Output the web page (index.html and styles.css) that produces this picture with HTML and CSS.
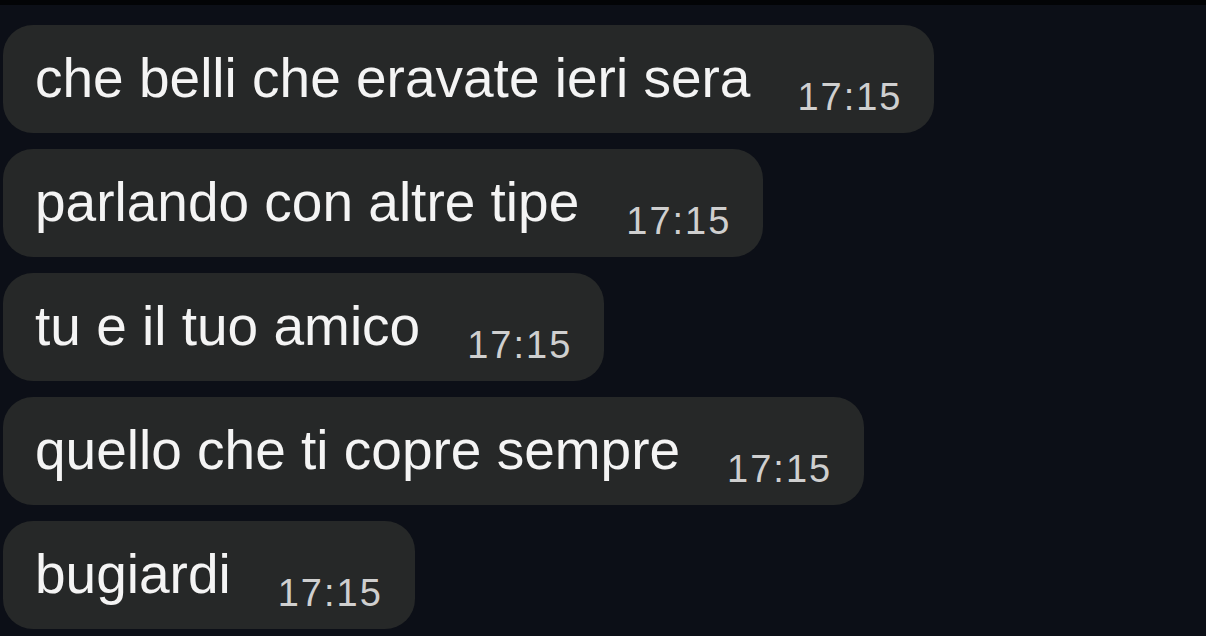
FILE: index.html
```html
<!DOCTYPE html>
<html lang="it">
<head>
<meta charset="utf-8">
<title>Chat</title>
<link rel="stylesheet" href="styles.css">
</head>
<body>
<div class="chat">
  <div class="bubble"><span class="msg">che belli che eravate ieri sera</span><span class="time">17:15</span></div>
  <div class="bubble"><span class="msg">parlando con altre tipe</span><span class="time">17:15</span></div>
  <div class="bubble"><span class="msg">tu e il tuo amico</span><span class="time">17:15</span></div>
  <div class="bubble"><span class="msg">quello che ti copre sempre</span><span class="time">17:15</span></div>
  <div class="bubble"><span class="msg">bugiardi</span><span class="time">17:15</span></div>
</div>
</body>
</html>
```

FILE: styles.css
```css
html, body {
  margin: 0;
  padding: 0;
  height: 100%;
  background: #0c0f17;
}
body {
  border-top: 5px solid #030406;
  box-sizing: border-box;
  overflow: hidden;
  font-family: "Liberation Sans", Arial, sans-serif;
}
.chat {
  display: flex;
  flex-direction: column;
  align-items: flex-start;
  gap: 16px;
  padding: 20px 0 0 3px;
}
.bubble {
  display: flex;
  align-items: flex-start;
  box-sizing: border-box;
  height: 108px;
  padding: 23px 32px 0 32px;
  background: #262828;
  border-radius: 30px;
}
.msg {
  font-size: 55px;
  line-height: 60px;
  color: #f4f4f4;
  white-space: nowrap;
}
.time {
  margin-left: 47px;
  margin-top: 30px;
  font-size: 38px;
  line-height: 38px;
  letter-spacing: 2px;
  color: #cfcfcf;
  white-space: nowrap;
}
```
